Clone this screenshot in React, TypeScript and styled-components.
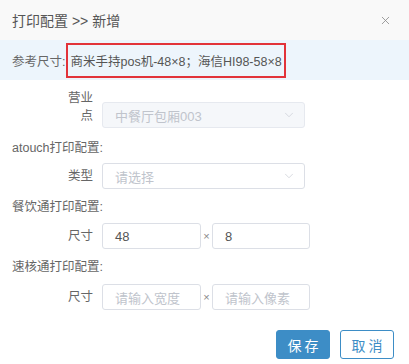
import React, { FC } from "react";
import styled, { createGlobalStyle } from "styled-components";
import { ChevronDown, X } from "lucide-react";

const GlobalStyle = createGlobalStyle`
  html, body {
    margin: 0;
    padding: 0;
    background: #fff;
  }
  body {
    font-family: "Liberation Sans", "Noto Sans CJK SC", sans-serif;
  }
`;

const Dialog = styled.div`
  width: 409px;
  height: 364px;
  background: #fff;
  display: flex;
  flex-direction: column;
  overflow: hidden;
`;

const Header = styled.div`
  height: 40px;
  padding: 0 17px 0 12px;
  display: flex;
  align-items: center;
  justify-content: space-between;
  background: #f9f9f9;
  color: #555;
  font-size: 14px;
`;

const CloseButton = styled.span`
  display: flex;
  color: #8a8a8a;
  cursor: pointer;
`;

const InfoBar = styled.div`
  height: 40px;
  padding-left: 12px;
  display: flex;
  align-items: center;
  background: #edf5fc;
  color: #666;
  font-size: 12.5px;
`;

const Highlight = styled.span`
  display: inline-flex;
  align-items: center;
  height: 31px;
  margin-left: 1px;
  padding: 0 2px;
  border: 2px solid #e2333a;
  color: #555;
`;

const Form = styled.div`
  padding: 0 12px;
  color: #666;
  font-size: 12.5px;
`;

const Row = styled.div<{ $top: number }>`
  display: flex;
  align-items: flex-end;
  margin-top: ${(p) => p.$top}px;
`;

const Label = styled.div<{ $two?: boolean }>`
  width: 81px;
  margin-right: 9px;
  text-align: right;
  line-height: 18px;
  padding-bottom: ${(p) => (p.$two ? 3 : 4)}px;
  box-sizing: border-box;
`;

const LabelText = styled.span`
  display: inline-block;
  width: 27px;
  text-align: right;
`;

const SectionTitle = styled.div<{ $top: number }>`
  line-height: 20px;
  margin-top: ${(p) => p.$top}px;
`;

const SelectBox = styled.div<{ $disabled?: boolean }>`
  width: 203px;
  height: 26px;
  box-sizing: border-box;
  border: 1px solid ${(p) => (p.$disabled ? "#e6e9ef" : "#dcdfe6")};
  border-radius: 3px;
  background: ${(p) => (p.$disabled ? "#f5f7fa" : "#fff")};
  padding: 0 8px 0 12px;
  display: flex;
  align-items: center;
  justify-content: space-between;
  color: #c0c4cc;
  font-size: 13px;
`;

const SizeGroup = styled.div`
  display: flex;
  align-items: center;
`;

const SizeInput = styled.div<{ $w: number; $empty?: boolean }>`
  width: ${(p) => p.$w}px;
  height: 26px;
  box-sizing: border-box;
  border: 1px solid #dcdfe6;
  border-radius: 3px;
  padding: 0 12px;
  display: flex;
  align-items: center;
  color: ${(p) => (p.$empty ? "#c0c4cc" : "#555")};
  font-size: 13px;
`;

const Times = styled.span`
  width: 11px;
  text-align: center;
  color: #888;
  font-size: 11px;
`;

const Footer = styled.div`
  display: flex;
  justify-content: flex-end;
  gap: 10px;
  padding-right: 3px;
  margin-top: 20px;
`;

const Button = styled.button<{ $primary?: boolean }>`
  width: 54px;
  height: 29px;
  border-radius: 3px;
  border: 1px solid #3d8dc6;
  background: ${(p) => (p.$primary ? "#3d8dc6" : "#fff")};
  color: ${(p) => (p.$primary ? "#fff" : "#3d8dc6")};
  font-family: inherit;
  font-size: 14px;
  letter-spacing: 3px;
  padding: 0 0 0 3px;
  cursor: pointer;
`;

const App: FC = () => {
  return (
    <Dialog>
      <GlobalStyle />
      <Header>
        <span>打印配置 &gt;&gt; 新增</span>
        <CloseButton>
          <X size={13} strokeWidth={1.5} />
        </CloseButton>
      </Header>
      <InfoBar>
        参考尺寸:
        <Highlight>商米手持pos机-48×8；海信HI98-58×8</Highlight>
      </InfoBar>
      <Form>
        <Row $top={9}>
          <Label $two>
            <LabelText>营业点</LabelText>
          </Label>
          <SelectBox $disabled>
            中餐厅包厢003
            <ChevronDown size={14} strokeWidth={1.2} color="#c8ccd4" />
          </SelectBox>
        </Row>
        <SectionTitle $top={10}>atouch打印配置:</SectionTitle>
        <Row $top={5}>
          <Label>类型</Label>
          <SelectBox>
            请选择
            <ChevronDown size={14} strokeWidth={1.2} color="#c8ccd4" />
          </SelectBox>
        </Row>
        <SectionTitle $top={8}>餐饮通打印配置:</SectionTitle>
        <Row $top={6}>
          <Label>尺寸</Label>
          <SizeGroup>
            <SizeInput $w={99}>48</SizeInput>
            <Times>×</Times>
            <SizeInput $w={98}>8</SizeInput>
          </SizeGroup>
        </Row>
        <SectionTitle $top={8}>速核通打印配置:</SectionTitle>
        <Row $top={7}>
          <Label>尺寸</Label>
          <SizeGroup>
            <SizeInput $w={99} $empty>
              请输入宽度
            </SizeInput>
            <Times>×</Times>
            <SizeInput $w={98} $empty>
              请输入像素
            </SizeInput>
          </SizeGroup>
        </Row>
        <Footer>
          <Button $primary>保存</Button>
          <Button>取消</Button>
        </Footer>
      </Form>
    </Dialog>
  );
};

export default App;
